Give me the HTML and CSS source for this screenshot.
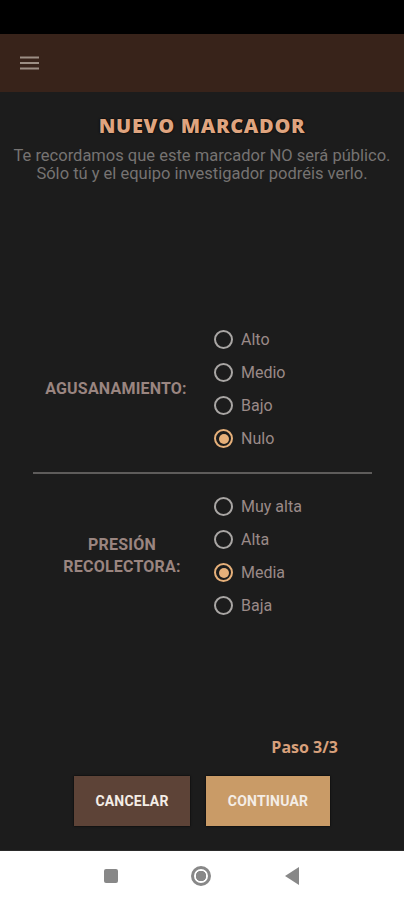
FILE: index.html
```html
<!DOCTYPE html>
<html lang="es">
<head>
    <meta charset="UTF-8">
    <meta name="viewport" content="width=device-width, initial-scale=1.0">
    <title>Nuevo marcador</title>
    <link rel="stylesheet" href="styles.css">
</head>
<body>
    <div class="statusbar"></div>

    <header class="appbar">
        <svg class="menu" width="20" height="14" viewBox="0 0 20 14">
            <rect x="0" y="0.5" width="19" height="2" />
            <rect x="0" y="6" width="19" height="2" />
            <rect x="0" y="11.5" width="19" height="2" />
        </svg>
    </header>

    <main class="contenido">
        <h1 class="titulo">NUEVO MARCADOR</h1>
        <p class="aviso">Te recordamos que este marcador NO será público.<br>Sólo tú y el equipo investigador podréis verlo.</p>

        <section class="grupo grupo-uno">
            <div class="etiqueta">AGUSANAMIENTO:</div>
            <div class="opciones">
                <label class="opcion"><span class="radio"></span>Alto</label>
                <label class="opcion"><span class="radio"></span>Medio</label>
                <label class="opcion"><span class="radio"></span>Bajo</label>
                <label class="opcion"><span class="radio marcado"></span>Nulo</label>
            </div>
        </section>

        <hr class="separador">

        <section class="grupo grupo-dos">
            <div class="etiqueta">PRESIÓN<br>RECOLECTORA:</div>
            <div class="opciones">
                <label class="opcion"><span class="radio"></span>Muy alta</label>
                <label class="opcion"><span class="radio"></span>Alta</label>
                <label class="opcion"><span class="radio marcado"></span>Media</label>
                <label class="opcion"><span class="radio"></span>Baja</label>
            </div>
        </section>

        <div class="paso">Paso 3/3</div>

        <div class="botones">
            <button class="boton cancelar">CANCELAR</button>
            <button class="boton continuar">CONTINUAR</button>
        </div>
    </main>

    <nav class="navbar">
        <span class="nav-cuadro"></span>
        <span class="nav-circulo"></span>
        <svg class="nav-atras" width="16" height="18" viewBox="0 0 16 18">
            <polygon points="15,0 15,18 1,9" />
        </svg>
    </nav>
</body>
</html>
```

FILE: styles.css
```css
body {
    margin: 0;
    background-color: #1c1c1c;
    font-family: Roboto, "Liberation Sans", sans-serif;
    width: 404px;
}

.statusbar {
    height: 34px;
    background-color: #000;
}

.appbar {
    height: 58px;
    background-color: #38231a;
    display: flex;
    align-items: center;
    padding-left: 20px;
}

.menu {
    fill: #9c8e84;
}

.contenido {
    height: 758px;
    display: flex;
    flex-direction: column;
}

.titulo {
    margin: 23px 0 0 0;
    text-align: center;
    font-family: "Open Sans", sans-serif;
    font-weight: 800;
    font-size: 20px;
    letter-spacing: 0.7px;
    line-height: 22px;
    color: #dfa47f;
    text-shadow: 0 0 2px #000, 0 0 1px #000;
}

.aviso {
    margin: 10px 0 0 0;
    text-align: center;
    font-size: 16.5px;
    line-height: 18px;
    color: #767372;
}

.grupo {
    display: flex;
    align-items: center;
}

.grupo-uno {
    margin-top: 140px;
}

.grupo-dos {
    margin-top: 16px;
}

.etiqueta {
    text-align: center;
    font-weight: bold;
    font-size: 16px;
    letter-spacing: 0.2px;
    line-height: 22px;
    color: #9a8580;
}

.grupo-uno .etiqueta {
    width: 166px;
    padding-left: 33px;
}

.grupo-dos .etiqueta {
    width: 154px;
    padding-left: 45px;
}

.opciones {
    display: flex;
    flex-direction: column;
    padding-left: 15px;
}

.opcion {
    height: 33px;
    display: flex;
    align-items: center;
    font-size: 16px;
    color: #9a8a88;
}

.radio {
    width: 15px;
    height: 15px;
    border: 2px solid #a9a6a4;
    border-radius: 50%;
    margin-right: 8px;
    position: relative;
}

.radio.marcado {
    border-color: #e6b07a;
}

.radio.marcado::after {
    content: "";
    position: absolute;
    left: 2.5px;
    top: 2.5px;
    width: 10px;
    height: 10px;
    border-radius: 50%;
    background-color: #e6b07a;
}

.separador {
    margin: 17px 32px 0 33px;
    border: none;
    height: 2px;
    background-color: #5e5c5b;
}

.paso {
    margin-top: 115px;
    text-align: right;
    padding-right: 66px;
    font-family: "Open Sans", sans-serif;
    font-weight: bold;
    font-size: 16px;
    line-height: 20px;
    color: #d8a07b;
}

.botones {
    margin-top: 19px;
    display: flex;
    justify-content: center;
    gap: 16px;
}

.boton {
    height: 50px;
    border: none;
    font-family: Roboto, "Liberation Sans", sans-serif;
    font-weight: bold;
    font-size: 14px;
    letter-spacing: 0.2px;
    color: #f4ede6;
    box-shadow: 0 0 2px #000;
}

.cancelar {
    width: 116px;
    background-color: #5d4337;
}

.continuar {
    width: 124px;
    background-color: #c99b67;
}

.navbar {
    height: 49px;
    border-top: 1px solid #2a2a2a;
    background-color: #fff;
    display: flex;
    align-items: center;
    justify-content: center;
    gap: 73px;
}

.nav-cuadro {
    width: 14px;
    height: 14px;
    border-radius: 2px;
    background-color: #888;
}

.nav-circulo {
    width: 14px;
    height: 14px;
    border: 3px solid #888;
    border-radius: 50%;
    background: radial-gradient(circle, #888 0, #888 5px, #fff 5.5px);
}

.nav-atras {
    fill: #888;
}
```
